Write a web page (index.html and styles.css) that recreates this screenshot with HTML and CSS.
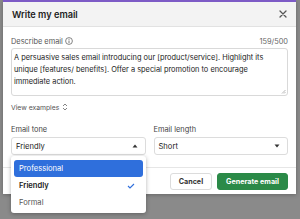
FILE: index.html
```html
<!DOCTYPE html>
<html>
<head>
<meta charset="utf-8">
<link rel="stylesheet" href="styles.css">
</head>
<body>
<div class="backdrop">
  <div class="modal">
    <header class="head">
      <h1 class="title">Write my email</h1>
      <span class="close"><svg width="8" height="8" viewBox="0 0 8 8"><path d="M1 1L7 7M7 1L1 7" stroke="#555" stroke-width="1.3" stroke-linecap="round"/></svg></span>
    </header>
    <div class="content">
      <div class="label-row">
        <span class="label">Describe email <svg class="info" width="8" height="8" viewBox="0 0 8 8"><circle cx="4" cy="4" r="3.4" fill="none" stroke="#666" stroke-width="0.8"/><path d="M4 3.5V6" stroke="#666" stroke-width="0.9"/><circle cx="4" cy="2.3" r="0.5" fill="#666"/></svg></span>
        <span class="count">159/500</span>
      </div>
      <div class="textarea">A persuasive sales email introducing our [product/service]. Highlight its unique [features/ benefits]. Offer a special promotion to encourage immediate action.<svg class="grip" width="5" height="5" viewBox="0 0 5 5"><path d="M4.5 1L1 4.5M4.5 3L3 4.5" stroke="#999" stroke-width="0.7"/></svg></div>
      <div class="examples">View examples <svg width="6" height="8" viewBox="0 0 6 8"><path d="M1 3L3 1L5 3M1 5L3 7L5 5" fill="none" stroke="#666" stroke-width="0.8"/></svg></div>
      <div class="fields">
        <div class="field">
          <div class="field-label">Email tone</div>
          <div class="select"><span>Friendly</span><svg width="6" height="4" viewBox="0 0 6 4"><path d="M0.5 3.5L3 0.5L5.5 3.5Z" fill="#333"/></svg></div>
          <div class="menu">
            <div class="item active">Professional</div>
            <div class="item selected"><span>Friendly</span><svg width="8" height="6" viewBox="0 0 8 6"><path d="M1 3L3 5L7 1" fill="none" stroke="#2f6fdc" stroke-width="1.1"/></svg></div>
            <div class="item muted">Formal</div>
          </div>
        </div>
        <div class="field">
          <div class="field-label">Email length</div>
          <div class="select"><span>Short</span><svg width="6" height="4" viewBox="0 0 6 4"><path d="M0.5 0.5L3 3.5L5.5 0.5Z" fill="#333"/></svg></div>
        </div>
      </div>
    </div>
    <footer class="foot">
      <button class="btn cancel">Cancel</button>
      <button class="btn primary">Generate email</button>
    </footer>
  </div>
</div>
</body>
</html>
```
FILE: styles.css
```css
* { box-sizing: border-box; }
html, body { margin: 0; padding: 0; }
body {
  font-family: Inter, "Liberation Sans", sans-serif;
  background: #8a8a8a;
  width: 300px;
  height: 219px;
  overflow: hidden;
}
.backdrop {
  padding: 0 4px 0 3px;
}
.modal {
  background: #fff;
  border-top: 2px solid #7d5bc6;
  box-shadow: 0 1px 4px rgba(0,0,0,0.25);
}
.head {
  display: flex;
  align-items: center;
  justify-content: space-between;
  height: 25px;
  padding: 0 9px 0 9px;
  background: #f3f3f3;
  border-bottom: 1px solid #e2e2e2;
}
.title {
  margin: 0;
  font-size: 9.2px;
  font-weight: 600;
  color: #222;
}
.close { display: flex; }
.content {
  padding: 8px 8px 12px 8px;
}
.label-row {
  display: flex;
  justify-content: space-between;
  align-items: center;
  height: 12px;
  margin-bottom: 1px;
  font-size: 7.4px;
  color: #555;
}
.label { display: flex; align-items: center; gap: 2px; }
.count { color: #666; }
.textarea {
  position: relative;
  height: 48px;
  border: 1px solid #d9d9d9;
  border-radius: 3px;
  padding: 3px 6px 0 2px;
  font-size: 7.4px;
  line-height: 12px;
  color: #222;
}
.grip { position: absolute; right: 1px; bottom: 1px; }
.examples {
  display: flex;
  align-items: center;
  gap: 3px;
  height: 12px;
  margin-top: 5px;
  font-size: 6.8px;
  color: #555;
}
.fields {
  display: grid;
  grid-template-columns: 1fr 1fr;
  gap: 8px;
  margin-top: 11px;
}
.field { position: relative; }
.field-label {
  height: 12px;
  line-height: 12px;
  font-size: 7.4px;
  color: #444;
  margin-bottom: 1px;
}
.select {
  display: flex;
  align-items: center;
  justify-content: space-between;
  height: 18px;
  border: 1px solid #dcdcdc;
  border-radius: 3px;
  padding: 0 7px 0 4px;
  font-size: 7.6px;
  color: #222;
}
.menu {
  position: absolute;
  left: 0;
  right: 0;
  top: 32px;
  background: #fff;
  border-radius: 3px;
  padding: 4px 3px 2px;
  box-shadow: 0 1px 4px rgba(0,0,0,0.3);
  z-index: 2;
}
.item {
  display: flex;
  align-items: center;
  justify-content: space-between;
  height: 17px;
  padding: 0 8px 0 5px;
  border-radius: 3px;
  font-size: 7.6px;
  color: #222;
}
.item.active { background: #2f6fdc; color: #fff; }
.item.selected { font-weight: 600; }
.item.muted { color: #555; }
.foot {
  display: flex;
  justify-content: flex-end;
  gap: 5px;
  padding: 5px 8px 4px;
  border-top: 1px solid #e6e6e6;
}
.btn {
  font-family: inherit;
  height: 17px;
  border-radius: 3px;
  font-size: 7.2px;
  font-weight: 700;
  padding: 0 8px;
  margin: 0;
}
.cancel { background: #fff; border: 1px solid #dcdcdc; color: #333; }
.primary { background: #2b8a48; border: 1px solid #2b8a48; color: #fff; }
```
